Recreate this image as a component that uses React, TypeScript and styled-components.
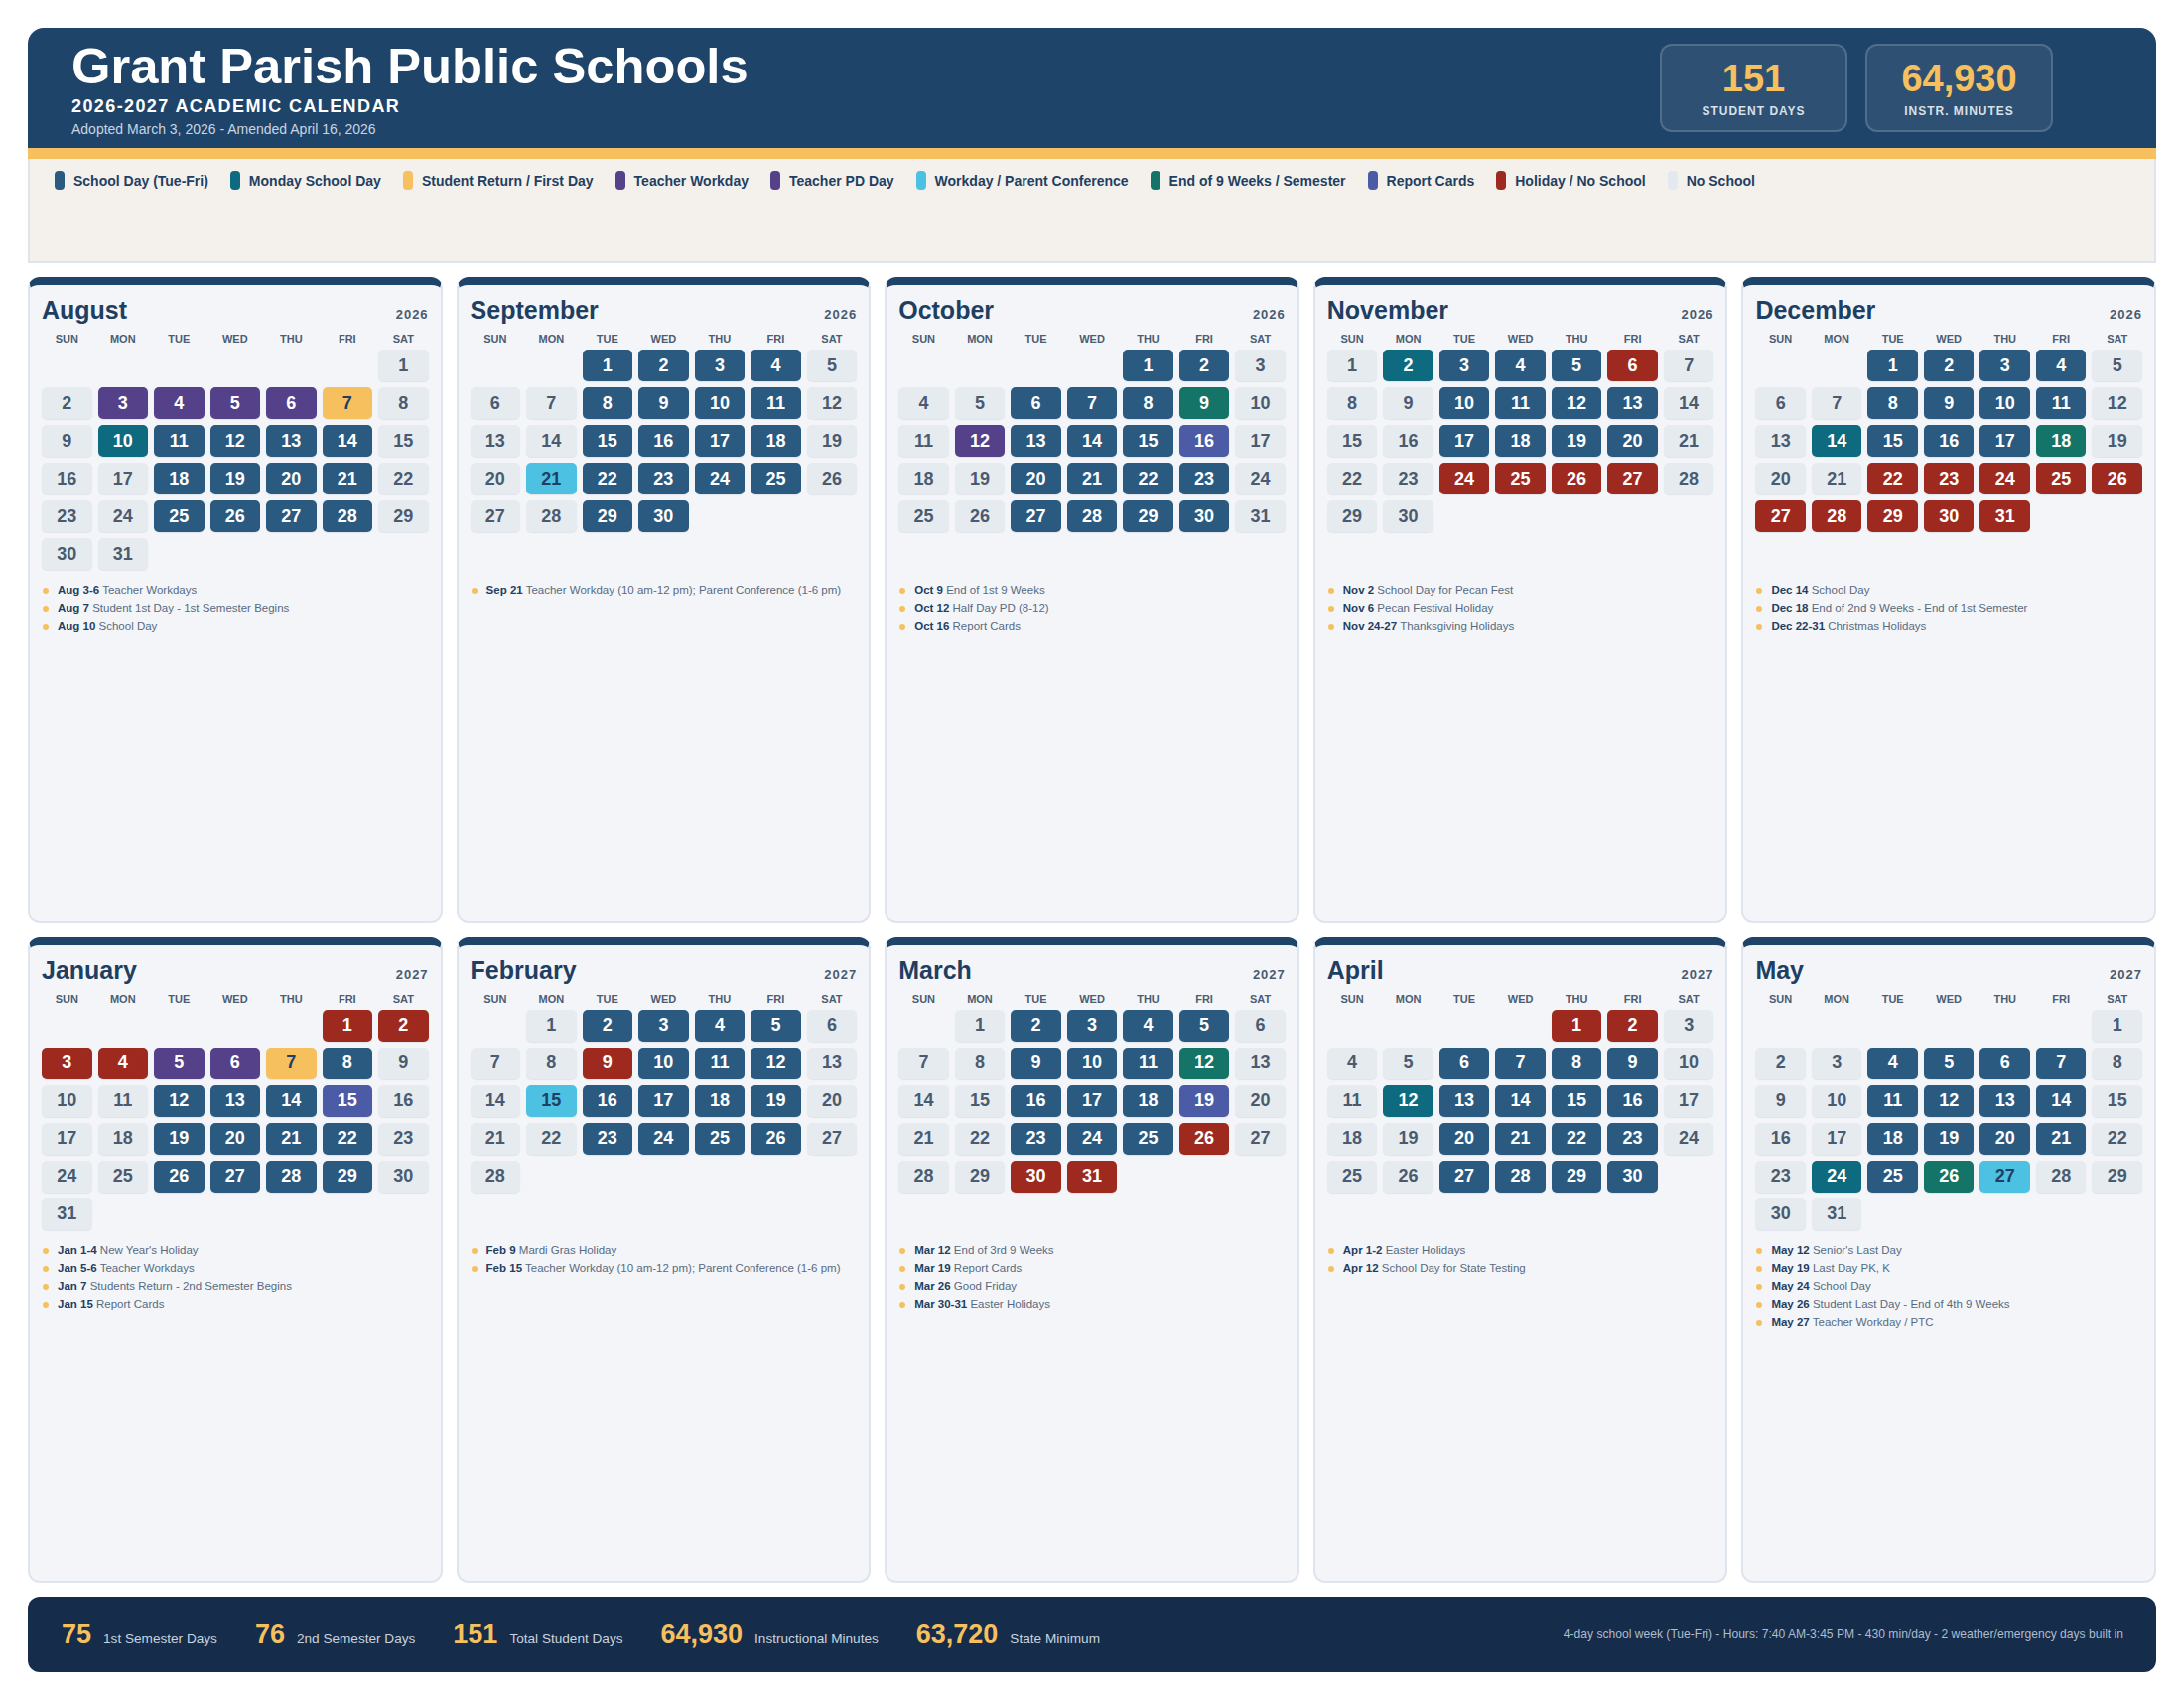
import React from "react";
import styled, { createGlobalStyle } from "styled-components";

const GlobalStyle = createGlobalStyle`
  html, body { margin: 0; padding: 0; background: #ffffff; }
  body { font-family: "Liberation Sans", Arial, sans-serif; }
  * { box-sizing: border-box; }
`;

type Kind = "s" | "m" | "f" | "w" | "p" | "c" | "e" | "r" | "h" | "n";

const KIND_COLORS: Record<Kind, { bg: string; fg: string }> = {
  s: { bg: "#2a5a80", fg: "#ffffff" },
  m: { bg: "#0e6a7e", fg: "#ffffff" },
  f: { bg: "#f6c05f", fg: "#1f3f63" },
  w: { bg: "#55408a", fg: "#ffffff" },
  p: { bg: "#55408a", fg: "#ffffff" },
  c: { bg: "#4dc1e2", fg: "#1f3f63" },
  e: { bg: "#137467", fg: "#ffffff" },
  r: { bg: "#4c5ba6", fg: "#ffffff" },
  h: { bg: "#9e2a1f", fg: "#ffffff" },
  n: { bg: "#e6ebf0", fg: "#4a5b70" },
};

const LEGEND: { kind: Kind; label: string; color?: string }[] = [
  { kind: "s", label: "School Day (Tue-Fri)" },
  { kind: "m", label: "Monday School Day" },
  { kind: "f", label: "Student Return / First Day" },
  { kind: "w", label: "Teacher Workday" },
  { kind: "p", label: "Teacher PD Day" },
  { kind: "c", label: "Workday / Parent Conference" },
  { kind: "e", label: "End of 9 Weeks / Semester" },
  { kind: "r", label: "Report Cards" },
  { kind: "h", label: "Holiday / No School" },
  { kind: "n", label: "No School", color: "#e3e9f0" },
];

type Month = {
  name: string;
  year: number;
  start: number;
  codes: string;
  notes: [string, string][];
};

const MONTHS: Month[] = [
  {
    name: "August",
    year: 2026,
    start: 6,
    codes: "nnwwwwfnnmssssnnnssssnnnssssnnn",
    notes: [
      ["Aug 3-6", "Teacher Workdays"],
      ["Aug 7", "Student 1st Day - 1st Semester Begins"],
      ["Aug 10", "School Day"],
    ],
  },
  {
    name: "September",
    year: 2026,
    start: 2,
    codes: "ssssnnnssssnnnssssnncssssnnnss",
    notes: [["Sep 21", "Teacher Workday (10 am-12 pm); Parent Conference (1-6 pm)"]],
  },
  {
    name: "October",
    year: 2026,
    start: 4,
    codes: "ssnnnsssennpsssrnnnssssnnnssssn",
    notes: [
      ["Oct 9", "End of 1st 9 Weeks"],
      ["Oct 12", "Half Day PD (8-12)"],
      ["Oct 16", "Report Cards"],
    ],
  },
  {
    name: "November",
    year: 2026,
    start: 0,
    codes: "nmssshnnnssssnnnssssnnnhhhhnnn",
    notes: [
      ["Nov 2", "School Day for Pecan Fest"],
      ["Nov 6", "Pecan Festival Holiday"],
      ["Nov 24-27", "Thanksgiving Holidays"],
    ],
  },
  {
    name: "December",
    year: 2026,
    start: 2,
    codes: "ssssnnnssssnnmsssennnhhhhhhhhhh",
    notes: [
      ["Dec 14", "School Day"],
      ["Dec 18", "End of 2nd 9 Weeks - End of 1st Semester"],
      ["Dec 22-31", "Christmas Holidays"],
    ],
  },
  {
    name: "January",
    year: 2027,
    start: 5,
    codes: "hhhhwwfsnnnsssrnnnssssnnnssssnn",
    notes: [
      ["Jan 1-4", "New Year's Holiday"],
      ["Jan 5-6", "Teacher Workdays"],
      ["Jan 7", "Students Return - 2nd Semester Begins"],
      ["Jan 15", "Report Cards"],
    ],
  },
  {
    name: "February",
    year: 2027,
    start: 1,
    codes: "nssssnnnhsssnncssssnnnssssnn",
    notes: [
      ["Feb 9", "Mardi Gras Holiday"],
      ["Feb 15", "Teacher Workday (10 am-12 pm); Parent Conference (1-6 pm)"],
    ],
  },
  {
    name: "March",
    year: 2027,
    start: 1,
    codes: "nssssnnnsssennnsssrnnnssshnnnhh",
    notes: [
      ["Mar 12", "End of 3rd 9 Weeks"],
      ["Mar 19", "Report Cards"],
      ["Mar 26", "Good Friday"],
      ["Mar 30-31", "Easter Holidays"],
    ],
  },
  {
    name: "April",
    year: 2027,
    start: 4,
    codes: "hhnnnssssnnmssssnnnssssnnnssss",
    notes: [
      ["Apr 1-2", "Easter Holidays"],
      ["Apr 12", "School Day for State Testing"],
    ],
  },
  {
    name: "May",
    year: 2027,
    start: 6,
    codes: "nnnssssnnnssssnnnssssnnmsecnnnn",
    notes: [
      ["May 12", "Senior's Last Day"],
      ["May 19", "Last Day PK, K"],
      ["May 24", "School Day"],
      ["May 26", "Student Last Day - End of 4th 9 Weeks"],
      ["May 27", "Teacher Workday / PTC"],
    ],
  },
];

const WEEKDAYS = ["SUN", "MON", "TUE", "WED", "THU", "FRI", "SAT"];

const FOOTER_STATS: [string, string][] = [
  ["75", "1st Semester Days"],
  ["76", "2nd Semester Days"],
  ["151", "Total Student Days"],
  ["64,930", "Instructional Minutes"],
  ["63,720", "State Minimum"],
];

/* ---------- layout ---------- */

const Page = styled.div`
  width: 2200px;
  height: 1700px;
  padding: 28px 28px 16px;
  display: flex;
  flex-direction: column;
  gap: 14px;
`;

const Top = styled.section`
  display: flex;
  flex-direction: column;
`;

const Header = styled.header`
  height: 132px;
  background: #1f4469;
  border-bottom: 11px solid #f6c05f;
  border-radius: 16px 16px 0 0;
  padding: 0 104px 0 44px;
  display: flex;
  align-items: center;
  justify-content: space-between;
  color: #ffffff;
`;

const TitleBlock = styled.div`
  display: flex;
  flex-direction: column;
`;

const Title = styled.h1`
  margin: 0;
  font-size: 50.7px;
  line-height: 55px;
  font-weight: 700;
  color: #ffffff;
`;

const Subtitle = styled.div`
  margin-top: 3px;
  font-size: 18px;
  line-height: 21px;
  font-weight: 700;
  letter-spacing: 1.4px;
  color: #ffffff;
`;

const Adopted = styled.div`
  margin-top: 3px;
  font-size: 14px;
  line-height: 18px;
  color: #c9d4e1;
`;

const StatBoxes = styled.div`
  display: flex;
  gap: 18px;
`;

const StatBox = styled.div`
  width: 189px;
  padding: 14px 0 11px;
  border: 2px solid rgba(255, 255, 255, 0.16);
  border-radius: 12px;
  background: rgba(255, 255, 255, 0.07);
  display: flex;
  flex-direction: column;
  align-items: center;
`;

const StatNumber = styled.div`
  font-size: 38px;
  line-height: 38px;
  font-weight: 700;
  color: #f6c05f;
`;

const StatLabel = styled.div`
  margin-top: 7px;
  font-size: 12px;
  line-height: 15px;
  font-weight: 700;
  letter-spacing: 1px;
  color: #d8e0ea;
`;

const Legend = styled.div`
  height: 105px;
  background: #f4f1ec;
  border: 2px solid #dfe4eb;
  border-top: none;
  padding: 12px 25px;
  display: flex;
  flex-wrap: wrap;
  align-content: flex-start;
  column-gap: 22px;
  row-gap: 8px;
`;

const LegendItem = styled.div`
  display: flex;
  align-items: center;
  gap: 9px;
  height: 19px;
  font-size: 14px;
  font-weight: 700;
  color: #1f3f63;
`;

const Swatch = styled.span<{ $color: string }>`
  width: 10px;
  height: 19px;
  border-radius: 4px;
  background: ${(p) => p.$color};
`;

const MonthsGrid = styled.main`
  flex: 1;
  min-height: 0;
  display: grid;
  grid-template-columns: repeat(5, 1fr);
  grid-template-rows: 1fr 1fr;
  gap: 14px;
`;

const Card = styled.article`
  background: #f3f5f9;
  border: 2px solid #dfe5ee;
  border-top: 8px solid #1f4469;
  border-radius: 12px;
  padding: 10px 12px 12px;
  display: flex;
  flex-direction: column;
`;

const CardHead = styled.div`
  display: flex;
  justify-content: space-between;
  align-items: baseline;
`;

const MonthName = styled.h2`
  margin: 0;
  font-size: 25px;
  line-height: 31px;
  font-weight: 700;
  color: #1e3f62;
`;

const Year = styled.span`
  font-size: 13px;
  font-weight: 700;
  letter-spacing: 1px;
  color: #4a5b70;
`;

const WeekRow = styled.div`
  margin-top: 6px;
  margin-bottom: 4px;
  display: grid;
  grid-template-columns: repeat(7, 1fr);
  column-gap: 6px;
`;

const WeekDay = styled.div`
  text-align: center;
  font-size: 11px;
  line-height: 14px;
  font-weight: 700;
  color: #4b5d73;
`;

const DaysGrid = styled.div`
  display: grid;
  grid-template-columns: repeat(7, 1fr);
  grid-template-rows: repeat(6, 32px);
  gap: 6px;
`;

const DayCell = styled.div<{ $bg: string; $fg: string }>`
  border-radius: 5px;
  background: ${(p) => p.$bg};
  color: ${(p) => p.$fg};
  display: flex;
  align-items: center;
  justify-content: center;
  font-size: 18px;
  font-weight: 700;
  box-shadow: 0 1px 1px rgba(20, 40, 70, 0.08);
`;

const Blank = styled.div``;

const Notes = styled.ul`
  list-style: none;
  margin: 11px 0 0;
  padding: 0;
`;

const Note = styled.li`
  display: flex;
  align-items: center;
  gap: 9px;
  font-size: 11.5px;
  line-height: 18px;
  color: #576b80;
  white-space: nowrap;
`;

const Dot = styled.span`
  flex: none;
  width: 6px;
  height: 6px;
  margin-left: 1px;
  margin-top: 2px;
  border-radius: 50%;
  background: #f6c05f;
`;

const NoteDate = styled.b`
  color: #1f3f63;
  font-weight: 700;
`;

const Footer = styled.footer`
  height: 76px;
  background: #152c4a;
  border-radius: 12px;
  padding: 0 33px 0 34px;
  display: flex;
  align-items: center;
  justify-content: space-between;
`;

const FooterStats = styled.div`
  display: flex;
  align-items: baseline;
  gap: 38px;
`;

const FooterStat = styled.div`
  display: flex;
  align-items: baseline;
  gap: 12px;
`;

const FooterNumber = styled.span`
  font-size: 27px;
  font-weight: 700;
  color: #f6c05f;
`;

const FooterLabel = styled.span`
  font-size: 13.6px;
  color: #c9d3df;
`;

const FooterNote = styled.div`
  font-size: 12.1px;
  color: #aebccc;
`;

function MonthCard({ m }: { m: Month }) {
  const blanks = Array.from({ length: m.start });
  return (
    <Card>
      <CardHead>
        <MonthName>{m.name}</MonthName>
        <Year>{m.year}</Year>
      </CardHead>
      <WeekRow>
        {WEEKDAYS.map((d) => (
          <WeekDay key={d}>{d}</WeekDay>
        ))}
      </WeekRow>
      <DaysGrid>
        {blanks.map((_, i) => (
          <Blank key={`b${i}`} />
        ))}
        {m.codes.split("").map((c, i) => {
          const col = KIND_COLORS[c as Kind];
          return (
            <DayCell key={i} $bg={col.bg} $fg={col.fg}>
              {i + 1}
            </DayCell>
          );
        })}
      </DaysGrid>
      <Notes>
        {m.notes.map(([d, t]) => (
          <Note key={d}>
            <Dot />
            <span>
              <NoteDate>{d}</NoteDate> {t}
            </span>
          </Note>
        ))}
      </Notes>
    </Card>
  );
}

export default function App() {
  return (
    <>
      <GlobalStyle />
      <Page>
        <Top>
          <Header>
            <TitleBlock>
              <Title>Grant Parish Public Schools</Title>
              <Subtitle>2026-2027 ACADEMIC CALENDAR</Subtitle>
              <Adopted>Adopted March 3, 2026 - Amended April 16, 2026</Adopted>
            </TitleBlock>
            <StatBoxes>
              <StatBox>
                <StatNumber>151</StatNumber>
                <StatLabel>STUDENT DAYS</StatLabel>
              </StatBox>
              <StatBox>
                <StatNumber>64,930</StatNumber>
                <StatLabel>INSTR. MINUTES</StatLabel>
              </StatBox>
            </StatBoxes>
          </Header>
          <Legend>
            {LEGEND.map((l) => (
              <LegendItem key={l.label}>
                <Swatch $color={l.color ?? KIND_COLORS[l.kind].bg} />
                {l.label}
              </LegendItem>
            ))}
          </Legend>
        </Top>
        <MonthsGrid>
          {MONTHS.map((m) => (
            <MonthCard key={m.name} m={m} />
          ))}
        </MonthsGrid>
        <Footer>
          <FooterStats>
            {FOOTER_STATS.map(([n, l]) => (
              <FooterStat key={l}>
                <FooterNumber>{n}</FooterNumber>
                <FooterLabel>{l}</FooterLabel>
              </FooterStat>
            ))}
          </FooterStats>
          <FooterNote>
            4-day school week (Tue-Fri) - Hours: 7:40 AM-3:45 PM - 430 min/day - 2
            weather/emergency days built in
          </FooterNote>
        </Footer>
      </Page>
    </>
  );
}
